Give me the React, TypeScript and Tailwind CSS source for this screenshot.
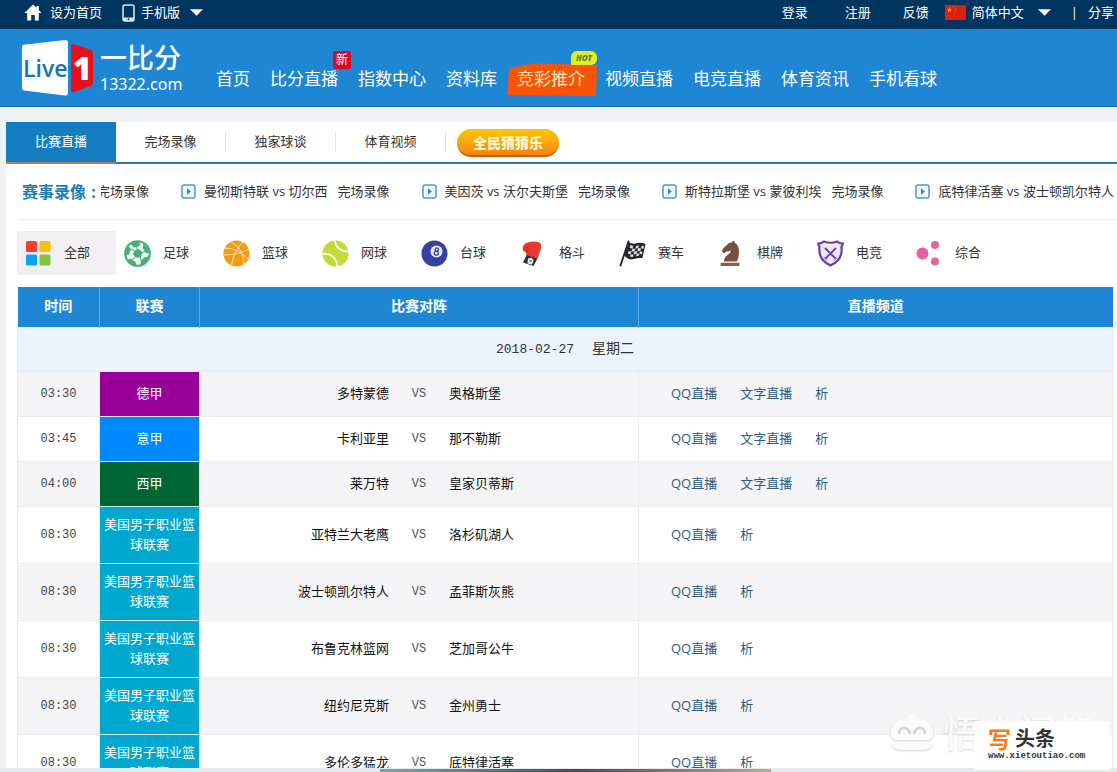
import React from "react";

const navItems = [
  { label: "首页" },
  { label: "比分直播", badge: "新" },
  { label: "指数中心" },
  { label: "资料库" },
  { label: "竞彩推介", hot: true },
  { label: "视频直播" },
  { label: "电竞直播" },
  { label: "体育资讯" },
  { label: "手机看球" },
];

const tabs = ["完场录像", "独家球谈", "体育视频"];

const replays = [
  "曼彻斯特联 vs 切尔西",
  "美因茨 vs 沃尔夫斯堡",
  "斯特拉斯堡 vs 蒙彼利埃",
  "底特律活塞 vs 波士顿凯尔特人",
];

const NBA = "美国男子职业篮球联赛";
const matches = [
  { time: "03:30", league: "德甲", color: "bg-[#990099]", home: "多特蒙德", away: "奥格斯堡", text: true },
  { time: "03:45", league: "意甲", color: "bg-[#0088ff]", home: "卡利亚里", away: "那不勒斯", text: true },
  { time: "04:00", league: "西甲", color: "bg-[#006633]", home: "莱万特", away: "皇家贝蒂斯", text: true },
  { time: "08:30", league: NBA, color: "bg-[#00a8d0]", home: "亚特兰大老鹰", away: "洛杉矶湖人" },
  { time: "08:30", league: NBA, color: "bg-[#00a8d0]", home: "波士顿凯尔特人", away: "孟菲斯灰熊" },
  { time: "08:30", league: NBA, color: "bg-[#00a8d0]", home: "布鲁克林篮网", away: "芝加哥公牛" },
  { time: "08:30", league: NBA, color: "bg-[#00a8d0]", home: "纽约尼克斯", away: "金州勇士" },
  { time: "08:30", league: NBA, color: "bg-[#00a8d0]", home: "多伦多猛龙", away: "底特律活塞" },
];

function Caret() {
  return (
    <svg viewBox="0 0 14 7" className="h-[7px] w-[13px]" aria-hidden="true">
      <path d="M0 0h14L7 7z" fill="#fff" />
    </svg>
  );
}

function Logo() {
  return (
    <svg viewBox="0 0 74 58" className="h-[58px] w-[74px] shrink-0">
      <path d="M2 7.5Q2 6 4 5.700L45 1Q48 .7 48 3.500V54Q48 57 45 56.500L4 51.500Q2 51.200 2 49.500z" fill="#fff" />
      <path d="M51 7Q51 4.500 53.500 5.300L70 10.500Q73 11.500 73 14V44Q73 46 70.500 47L54 53Q51 54 51 51z" fill="#e8101c" />
      <text x="3" y="38" fontSize="23" fontWeight="600" fill="#1673b4" fontFamily="'Open Sans', sans-serif">Live</text>
      <text x="53" y="41" fontSize="32" fontWeight="800" fill="#fff" fontFamily="'Open Sans', sans-serif">1</text>
    </svg>
  );
}

const icon = "h-[27px] w-[27px] shrink-0";

const AllIcon = (
  <svg viewBox="0 0 27 27" className={icon}>
    <rect x="1" y="1" width="11" height="11" rx="1.500" fill="#f5402f" />
    <rect x="14.500" y="1" width="11" height="11" rx="1.500" fill="#fbbd09" />
    <rect x="1" y="14.500" width="11" height="11" rx="1.500" fill="#0aa5ec" />
    <rect x="14.500" y="14.500" width="11" height="11" rx="1.500" fill="#83c341" />
  </svg>
);

const SoccerIcon = (
  <svg viewBox="0 0 27 27" className={icon}>
    <circle cx="13.500" cy="13.500" r="12.300" fill="#ecfaf1" stroke="#46ae79" strokeWidth="2" />
    <g fill="#46ae79">
      <path d="M10.500 10.500l4.500-1.500 3.500 3.500-1.800 4.700-5 .6-2.700-3.800z" />
      <path d="M6.500 3.500L13 1l3.500 2.500-2 3-4.500 1z" />
      <path d="M19.500 3.500l4.500 5 1 5-3.500-1-2.700-4.500z" />
      <path d="M25 16.500l-4 7-4 1.500-.5-3.500 3.500-4z" />
      <path d="M12.500 26l-6-2-3.500-4.500 4-.5 4.500 3z" />
      <path d="M1.200 16l.3-7L4.500 5.500l2.200 3.700-1.700 5.300z" />
    </g>
    <path d="M12.500 6.500l1 4M18 12.500l3.500-1M16 17l1.500 4.500M11 17.500l-4 2.500M10 10.500L6 9" stroke="#46ae79" strokeWidth="1" fill="none" />
  </svg>
);

const BasketballIcon = (
  <svg viewBox="0 0 27 27" className={icon}>
    <circle cx="13.500" cy="13.500" r="13" fill="#f59a18" />
    <path d="M1 15Q15 15 26 9M8 2Q21 9 21 24M20 2Q11 10 8.500 25M2 8Q14 8 25 19" stroke="#fde3b0" strokeWidth="1" fill="none" />
  </svg>
);

const TennisIcon = (
  <svg viewBox="0 0 27 27" className={icon}>
    <circle cx="13.500" cy="13.500" r="13" fill="#c3da38" />
    <path d="M.8 14Q14 13 15.500 26.500M12.500 .6Q15 11.500 26.400 11.500" stroke="#fff" strokeWidth="1.700" fill="none" />
  </svg>
);

const EightBallIcon = (
  <svg viewBox="0 0 27 27" className={icon}>
    <circle cx="13.500" cy="13.500" r="13" fill="#3540a4" />
    <circle cx="15.500" cy="11.500" r="6" fill="#e9ebfa" />
    <circle cx="15.800" cy="9.600" r="1.700" fill="none" stroke="#3540a4" strokeWidth="1.300" />
    <circle cx="15.300" cy="13.200" r="2" fill="none" stroke="#3540a4" strokeWidth="1.300" />
  </svg>
);

const GloveIcon = (
  <svg viewBox="0 0 27 27" className={icon}>
    <path d="M8 2.500Q13 .8 19 2.200Q22 3.500 21 9L17.500 18.500L6.500 15.500L6 12.500Q1.500 11 3 6.500Q4.500 3 8 2.500z" fill="#e63a30" />
    <path d="M6 5.500Q9 8 7 13" stroke="#b9211d" strokeWidth="1" fill="none" />
    <path d="M6.500 15L17.500 18.500L13.500 26L3 22.500z" fill="#28313d" />
    <path d="M8 18.500l3.500-.8 2.200 2.500-1.700 4.300-4.500-1z" fill="#e9edf1" />
    <path d="M9.500 21h2.200" stroke="#38537c" strokeWidth="1.400" />
  </svg>
);

const FlagIcon = (
  <svg viewBox="0 0 27 27" className={icon}>
    <path d="M9.500 1.500L1.500 25.500" stroke="#25262c" strokeWidth="1.900" strokeLinecap="round" />
    <path d="M9.500 2Q14 5 18 3Q22 2 26.500 4L23.500 18Q19 17.500 15 19Q10 20.500 5.500 16z" fill="#25262c" />
    <path d="M11.500 5l2.800 1-.9 2.800-2.800-1zM17.200 6l2.800-.8-.8 2.800-2.900.8zM22.800 5.500l2.200.7-.7 2.700-2.300-.7zM13.400 8.800l2.900 0-.9 2.800-2.900 0zM19.200 8l2.800.2-.8 3-2.800-.2zM9.700 11l2.800.6-.9 2.800-2.800-1zM15.400 11.600l3-.6-.8 2.800-3 .8zM21.200 11.200l2.200.8-.6 2.400-2.400-.8zM11.600 14.400l3 .2-.7 2.300-2.800-.1zM17.600 13.800l2.800-.2-.6 2.200-2.700.4z" fill="#dcdee3" />
  </svg>
);

const KnightIcon = (
  <svg viewBox="0 0 27 27" className={icon}>
    <path d="M16 .5L17 3Q21 5 21 12Q21 17 19 21.500H6Q6 17 10 14.500Q13 12.500 13 10.500Q10.500 12 8 11.500L6 13.500L4 11.500Q4.500 8 8.500 5.500Q9.500 3 13.500 2.500z" fill="#79503f" />
    <rect x="2.500" y="22.800" width="19" height="3.200" rx="1" fill="#8d5d50" />
  </svg>
);

const ShieldIcon = (
  <svg viewBox="0 0 27 27" className={icon}>
    <path d="M1.200 3.500Q5 3.500 7 1.500Q13.500 4 20 1.500Q22 3.500 25.800 3.500L24.500 7Q26 20 13.500 25.500Q1 20 2.500 7z" fill="#efe8f9" stroke="#65439f" strokeWidth="2.200" />
    <path d="M8 8l11 11M19 8L8 19" stroke="#65439f" strokeWidth="1.800" />
    <path d="M7 17.500l3 3M20 17.500l-3 3" stroke="#a98fd2" strokeWidth="1.400" />
  </svg>
);

const MoreIcon = (
  <svg viewBox="0 0 27 27" className={icon}>
    <circle cx="6.500" cy="13.500" r="6" fill="#e3609b" />
    <circle cx="19" cy="5" r="4" fill="#dd6a91" />
    <circle cx="19" cy="21.500" r="4" fill="#dd6a91" />
  </svg>
);

const categories = [
  { label: "全部", icon: AllIcon, active: true },
  { label: "足球", icon: SoccerIcon },
  { label: "篮球", icon: BasketballIcon },
  { label: "网球", icon: TennisIcon },
  { label: "台球", icon: EightBallIcon },
  { label: "格斗", icon: GloveIcon },
  { label: "赛车", icon: FlagIcon },
  { label: "棋牌", icon: KnightIcon },
  { label: "电竞", icon: ShieldIcon },
  { label: "综合", icon: MoreIcon },
];

function TopBar() {
  return (
    <div className="flex h-[29px] items-center bg-[#00355f] pr-[3px] pb-1 pl-6 text-[13px] whitespace-nowrap text-white">
      <a href="#home" className="flex items-center gap-2">
        <svg viewBox="0 0 18 17" className="h-[17px] w-[18px]" aria-hidden="true">
          <path d="M9 .5L.5 9h2.700v7.500h4V11h3.600v5.500h4V9h2.700L14.800 6V2h-2.300v1.800z" fill="#fff" />
        </svg>
        设为首页
      </a>
      <button type="button" className="ml-5 flex items-center gap-[6px]">
        <svg viewBox="0 0 13 18" className="h-[18px] w-[13px]" aria-hidden="true">
          <rect x="1" y="1" width="11" height="16" rx="2" fill="none" stroke="#dce9f4" strokeWidth="1.500" />
          <path d="M1 13.500h11V16q0 1-1 1H2q-1 0-1-1z" fill="#dce9f4" />
          <circle cx="6.500" cy="15.200" r="1" fill="#00355f" />
        </svg>
        手机版
        <span className="ml-1"><Caret /></span>
      </button>
      <nav className="ml-auto flex items-center" aria-label="账户">
        <a href="#login">登录</a>
        <a href="#register" className="ml-[37px]">注册</a>
        <a href="#feedback" className="ml-8">反馈</a>
        <button type="button" className="ml-4 flex items-center gap-[6px]">
          <svg viewBox="0 0 21 15" className="h-[15px] w-[21px]" aria-hidden="true">
            <path d="M0 0h21v15H0z" fill="#d9230f" />
            <path d="M4.500 2l.7 1.900h2l-1.600 1.200.6 2-1.700-1.200-1.700 1.200.6-2L1.800 3.900h2z" fill="#f8a51b" />
            <path d="M8.500 1.500h1v1h-1zM10 3.500h1v1h-1zM10 5.500h1v1h-1zM8.500 7.500h1v1h-1z" fill="#ea6a17" />
          </svg>
          简体中文
          <span className="ml-2"><Caret /></span>
        </button>
        <span className="ml-5">|</span>
        <a href="#share" className="ml-[10px]">分享</a>
      </nav>
    </div>
  );
}

function Header() {
  return (
    <header className="flex h-[78px] items-start border-b border-[#1767a6] bg-[#1f86d4] pt-[10px] pl-5 whitespace-nowrap text-white">
      <a href="#top" className="flex w-[196px] shrink-0 items-start gap-[6px]">
        <Logo />
        <span className="flex flex-col pt-[3px]">
          <span className="text-[27px] leading-8 font-medium">一比分</span>
          <span className="font-['Noto_Sans'] text-[16px] leading-5">13322.com</span>
        </span>
      </a>
      <nav className="flex gap-5 pt-6 text-[17px] leading-8" aria-label="主导航">
        {navItems.map((item) => (
          <a key={item.label} href={"#" + item.label} className="relative isolate">
            {item.hot && (
              <>
                <svg viewBox="0 0 90 34" className="absolute -top-[1px] -left-[10px] -z-10 h-[34px] w-[90px] max-w-none" aria-hidden="true">
                  <path d="M4 6L17 3L29 1.500L88 3Q90 3 90 5L89 33Q89 34 87 34L2 33Q0 33 0 31L2 8Q2 6.500 4 6z" fill="#fb5408" />
                </svg>
                <span className="absolute -top-3 left-[54px] rounded-md rounded-bl-none bg-[#e5ed20] px-[5px] font-['Open_Sans'] text-[8px] leading-[14px] font-extrabold text-[#4c8b22] italic">HOT</span>
              </>
            )}
            <span className={item.hot ? "text-[#ffedb8]" : ""}>{item.label}</span>
            {item.badge && (
              <span className="absolute -top-3 left-[63px] rounded-xs bg-[#d20f2b] px-[3px] text-[12px] leading-[18px]">{item.badge}</span>
            )}
          </a>
        ))}
      </nav>
    </header>
  );
}

function Tabs() {
  return (
    <nav className="flex h-[42px] border-b-2 border-[#2b7da0] text-[13px] text-[#333]" aria-label="栏目">
      <a href="#live" className="-mb-[2px] flex w-[110px] items-center justify-center border-b-2 border-[#bd7458] bg-[#147dc0] text-white">比赛直播</a>
      {tabs.map((tab) => (
        <a key={tab} href={"#" + tab} className="my-[10px] flex w-[110px] items-center justify-center border-r border-[#e4e4e4]">{tab}</a>
      ))}
      <button type="button" className="mt-[7px] ml-[11px] h-7 w-[102px] rounded-full border-b-2 border-[#c25f0b] bg-linear-to-b from-[#fcc800] to-[#f7820e] text-[14px] font-black text-[#fff8cf]">
        全民猜猜乐
      </button>
    </nav>
  );
}

function Replays() {
  return (
    <div className="ml-3 flex h-14 items-center overflow-hidden border-b border-[#efefef] pl-1 whitespace-nowrap text-[#333]">
      <h2 className="flex shrink-0 text-[16px] font-bold text-[#1f7db5]">
        赛事录像
        <span className="w-[15px] text-center">:</span>
      </h2>
      <div className="flex min-w-0 flex-1 overflow-hidden text-[13px]">
        <a href="#replay" className="-ml-1">完场录像</a>
        {replays.map((r) => (
          <a key={r} href="#replay" className="ml-8 flex items-center gap-2">
            <svg viewBox="0 0 15 15" className="h-[15px] w-[15px]" aria-hidden="true">
              <rect x="1" y="1" width="13" height="13" rx="2" fill="#eef8fd" stroke="#4c9cbd" strokeWidth="1.500" />
              <path d="M6 4.300v6.400l3.800-3.200z" fill="#3186b4" />
            </svg>
            <span className="flex gap-[10px]">
              <span>{r}</span>
              <span>完场录像</span>
            </span>
          </a>
        ))}
      </div>
    </div>
  );
}

function Schedule() {
  return (
    <table className="w-full table-fixed border-collapse text-[13px]">
      <colgroup>
        <col className="w-[82px]" />
        <col className="w-[100px]" />
        <col className="w-[439px]" />
        <col />
      </colgroup>
      <thead>
        <tr className="h-10 bg-[#1f86d4] text-[14px] text-white">
          <th className="border-r border-[#5ba8e2] pb-[2px]">时间</th>
          <th className="border-r border-[#5ba8e2] pb-[2px]">联赛</th>
          <th className="border-r border-[#5ba8e2] pb-[2px]">比赛对阵</th>
          <th className="pb-[2px]">直播频道</th>
        </tr>
      </thead>
      <tbody>
        <tr className="h-[44px] bg-[#ecf3fc] text-[#333]">
          <td colSpan={4} className="border border-[#e8ecf1] pb-[2px] text-center">
            <span className="font-['Liberation_Mono'] font-medium">2018-02-27</span>
            <span className="ml-[18px] text-[14px]">星期二</span>
          </td>
        </tr>
        {matches.map((m, i) => (
          <tr key={m.home} className={m.text ? "h-[45px] even:bg-[#f5f4f6]" : "h-[57px] even:bg-[#f5f4f6]"}>
            <td className="border border-[#ebebed] text-center font-['Liberation_Mono'] text-[12px] text-[#444]">{m.time}</td>
            <td className={"border border-[#d8e6ea] px-[1px] pb-[2px] text-center leading-5 text-white " + m.color}>{m.league}</td>
            <td className="border border-[#ebebed]">
              <div className="flex items-center text-[#111]">
                <span className="flex-1 text-right">{m.home}</span>
                <span className="w-[60px] text-center font-['Liberation_Mono'] text-[12px] text-[#555]">VS</span>
                <span className="flex-1">{m.away}</span>
              </div>
            </td>
            <td className="border border-[#ebebed] pl-8 text-[#2d5d80]">
              <div className="flex gap-[23px]">
                <a href={"#qq-" + i}>QQ直播</a>
                {m.text && <a href={"#text-" + i}>文字直播</a>}
                <a href={"#stats-" + i}>析</a>
              </div>
            </td>
          </tr>
        ))}
      </tbody>
    </table>
  );
}

function Watermark() {
  return (
    <div className="pointer-events-none absolute right-2 bottom-0 h-[66px] w-[220px]">
      <div className="flex items-center gap-2 text-[38px] leading-[52px] font-medium text-[#fafafa] [text-shadow:0_1px_2px_#d4d4d4]">
        <svg viewBox="0 0 46 40" className="h-10 w-[46px] shrink-0 drop-shadow-[0_1px_1px_#d0d0d0]" aria-hidden="true">
          <path d="M23 1q4 5 11 6q10 3 10 15q0 4-4 6H6q-4-2-4-6Q2 10 12 7q7-1 11-6zM3 30q10 4 20 1q10 3 20-1q0 8-9 8H12q-9 0-9-8z" fill="#fafafa" />
          <path d="M10 22q0-6 5-6t6 6M25 22q1-6 6-6t5 6" fill="none" stroke="#d4d4d4" strokeWidth="2.500" />
        </svg>
        <span className="whitespace-nowrap">悟空问答</span>
      </div>
      <div className="absolute right-0 bottom-[2px] flex h-[49px] w-[134px] flex-col bg-white pt-[6px] pl-[13px] text-[#333]">
        <span className="flex items-center gap-1 text-[20px] leading-6 font-bold">
          <span className="text-[23px] text-[#f47d20]">写</span>
          <span>头条</span>
        </span>
        <span className="font-['Liberation_Mono'] text-[9px] leading-[10px] font-bold">www.xietoutiao.com</span>
      </div>
    </div>
  );
}

export default function App() {
  return (
    <div className="relative h-screen overflow-hidden bg-[#eef2f5] font-['Open_Sans','Noto_Sans_CJK_SC',sans-serif]">
      <TopBar />
      <Header />
      <main className="mt-[15px] ml-[6px] bg-white">
        <Tabs />
        <Replays />
        <div className="mt-[11px] ml-[11px] flex text-[13px] text-[#333]">
          {categories.map((c) => (
            <button
              key={c.label}
              type="button"
              className={"flex h-11 w-[99px] shrink-0 items-center gap-3 pl-[8px] " + (c.active ? "bg-[#f1eff1]" : "")}
            >
              {c.icon}
              {c.label}
            </button>
          ))}
        </div>
        <div className="mt-3 mr-1 ml-[11px]">
          <Schedule />
        </div>
      </main>
      <div className="absolute inset-x-0 bottom-0 flex h-1 justify-start bg-[#e7eaeb]" aria-hidden="true">
        <div className="ml-[34%] h-[3px] w-[35%] self-end bg-linear-to-r from-[#76a7ad] via-[#4b4a50] to-[#b7a9a3]" />
      </div>
      <Watermark />
    </div>
  );
}
